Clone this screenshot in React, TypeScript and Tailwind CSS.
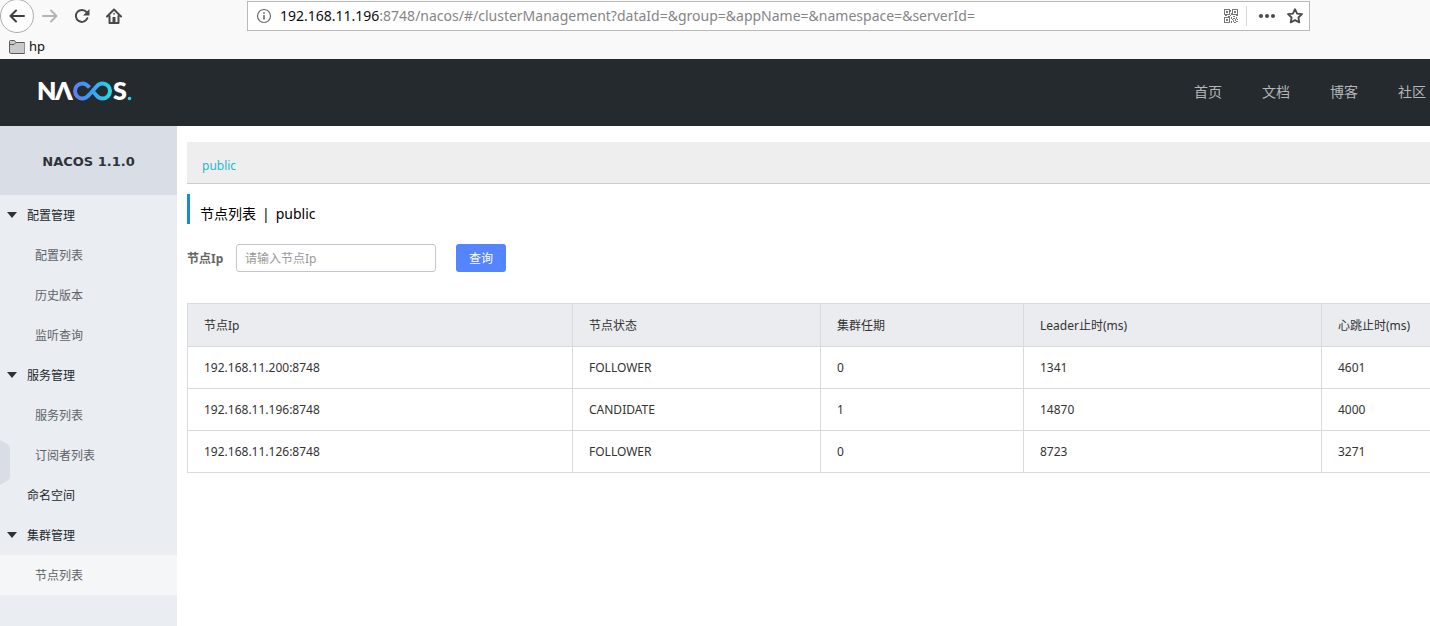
const navLinks = ['首页', '文档', '博客', '社区'];

const menu = [
  { title: '配置管理', children: ['配置列表', '历史版本', '监听查询'] },
  { title: '服务管理', children: ['服务列表', '订阅者列表'] },
  { title: '命名空间', children: [] },
  { title: '集群管理', children: ['节点列表'] },
];

const activeItem = '节点列表';

const columns = [
  { label: '节点Ip', width: 'w-[385px]' },
  { label: '节点状态', width: 'w-[248px]' },
  { label: '集群任期', width: 'w-[203px]' },
  { label: 'Leader止时(ms)', width: 'w-[298px]' },
  { label: '心跳止时(ms)', width: '' },
];

const nodes = [
  ['192.168.11.200:8748', 'FOLLOWER', '0', '1341', '4601'],
  ['192.168.11.196:8748', 'CANDIDATE', '1', '14870', '4000'],
  ['192.168.11.126:8748', 'FOLLOWER', '0', '8723', '3271'],
];

function QrIcon() {
  return (
    <svg width="14" height="14" viewBox="0 0 14 14" fill="#77777a" shapeRendering="crispEdges">
      <path fillRule="evenodd" d="M0 0h6v6H0zM1 1v4h4V1zM8 0h6v6H8zM9 1v4h4V1zM0 8h6v6H0zM1 9v4h4V9z" />
      <path d="M2 2h2v2H2zM10 2h2v2h-2zM2 10h2v2H2zM6 1h1v2H6zM7 4h1v2H7zM1 6h2v1H1zM4 7h2v1H4zM6 6h1v1H6zM9 7h2v1H9zM12 6h2v1h-2zM7 8h1v2H7zM9 9h2v1H9zM12 8h1v2h-1zM8 10h1v1H8zM11 10h1v2h-1zM13 10h1v1h-1zM7 12h1v2H7zM9 11h1v2H9zM10 13h2v1h-2zM12 12h2v1h-2z" />
    </svg>
  );
}

function BrowserBar() {
  return (
    <div className="h-[59px] bg-[#f9f9fa]">
      <div className="flex h-8 items-center">
        <div className="flex w-[247px] shrink-0 items-center">
          <button aria-label="Back" className="flex size-[34px] shrink-0 items-center justify-center rounded-full border border-[#adadae] bg-[#fdfdfd]">
            <svg width="16" height="16" viewBox="0 0 16 16" fill="none" stroke="#3f3f41" strokeWidth="2" strokeLinecap="round" strokeLinejoin="round">
              <path d="M15 8H1.5M7 2.5 1.5 8 7 13.5" />
            </svg>
          </button>
          <button aria-label="Forward" className="flex w-8 justify-center">
            <svg width="16" height="16" viewBox="0 0 16 16" fill="none" stroke="#b4b4b6" strokeWidth="2" strokeLinecap="round" strokeLinejoin="round">
              <path d="M1 8h13.500M9 2.500 14.500 8 9 13.500" />
            </svg>
          </button>
          <button aria-label="Reload" className="flex w-8 justify-center">
            <svg width="16" height="16" viewBox="0 0 16 16" fill="none" stroke="#4a4a4c" strokeWidth="2" strokeLinecap="round">
              <path d="M13.4 10.2A6 6 0 1 1 12.6 4.2" />
              <path d="M15.5 1v6.5H9z" fill="#4a4a4c" stroke="none" />
            </svg>
          </button>
          <button aria-label="Home" className="flex w-8 justify-center">
            <svg width="16" height="16" viewBox="0 0 16 16" fill="none" stroke="#4a4a4c" strokeWidth="2" strokeLinecap="round" strokeLinejoin="round">
              <path d="M1 8.5 8 1.5l7 7M3.5 8v7h9V8" />
              <path d="M6.5 9h3v6h-3z" fill="#4a4a4c" stroke="none" />
              <path d="M8 5.5v.5" strokeWidth="1.5" />
            </svg>
          </button>
        </div>
        <div className="mr-[120px] flex h-[30px] flex-1 items-center border border-[#b9b9ba] bg-white font-['Noto_Sans','Noto_Sans_CJK_SC',sans-serif] text-sm">
          <svg className="mx-2 shrink-0" width="16" height="16" viewBox="0 0 16 16" fill="none" stroke="#6a6a6c">
            <circle cx="8" cy="8" r="6.5" strokeWidth="1.2" />
            <path d="M8 7v4.5M8 4.2v1.6" strokeWidth="1.6" />
          </svg>
          <label htmlFor="address" className="text-[#0c0c0d]">192.168.11.196</label>
          <input
            id="address"
            className="min-w-0 flex-1 text-[#858587] outline-none"
            defaultValue=":8748/nacos/#/clusterManagement?dataId=&group=&appName=&namespace=&serverId="
          />
          <button aria-label="QR code"><QrIcon /></button>
          <span className="mx-2 h-5 w-px bg-[#d7d7db]" />
          <button aria-label="Page actions" className="flex w-6 justify-center">
            <svg width="16" height="16" viewBox="0 0 16 16" fill="#4a4a4c">
              <circle cx="2" cy="8" r="2" />
              <circle cx="8" cy="8" r="2" />
              <circle cx="14" cy="8" r="2" />
            </svg>
          </button>
          <button aria-label="Bookmark" className="mr-1.5 ml-2">
            <svg width="16" height="16" viewBox="0 0 16 16" fill="none" stroke="#4a4a4c" strokeWidth="1.8" strokeLinejoin="round">
              <path d="m8 1.2 2.1 4.4 4.9.6-3.6 3.3.9 4.9L8 12.1l-4.3 2.3.9-4.9L1 6.2l4.9-.6z" />
            </svg>
          </button>
        </div>
      </div>
      <div className="flex h-[27px] items-center gap-1 pt-0.5 pl-[9px]">
        <svg width="16" height="14" viewBox="0 0 16 14" fill="#c9c9cb" stroke="#5b5b5d">
          <path d="M.5 12.5v-11q0-1 1-1h4l1.5 2h8q1 0 1 1v9q0 1-1 1h-13q-1 0-1-1z" />
          <path d="M.5 4.5H5l2-2" fill="none" />
        </svg>
        <a href="#hp" className="font-['Noto_Sans',sans-serif] text-[13px] text-[#0c0c0d]">hp</a>
      </div>
    </div>
  );
}

function Logo() {
  return (
    <svg width="96" height="44" viewBox="0 0 96 44" role="img" aria-label="NACOS">
      <defs>
        <linearGradient id="loop" x1="36" y1="0" x2="74" y2="0" gradientUnits="userSpaceOnUse">
          <stop offset="0" stopColor="#5a7ff0" />
          <stop offset="0.45" stopColor="#3f9cf5" />
          <stop offset="1" stopColor="#25dbe6" />
        </linearGradient>
      </defs>
      <g fill="#fff" fontFamily="Lato, sans-serif" fontWeight="800" fontSize="25">
        <text x="-1" y="31">N</text>
        <text x="17" y="31">Λ</text>
        <text x="75" y="31">S</text>
      </g>
      <g fill="none" stroke="url(#loop)" strokeWidth="4" strokeLinejoin="round">
        <path d="M51.500 18.500Q48 14.500 44.500 14.500a7.500 7.500 0 0 0 0 15Q48 29.500 51.500 25.500" />
        <path d="M51 26 58.500 17.500Q61 14.500 64.500 14.500a7.500 7.500 0 0 1 0 15Q61 29.500 58.500 26.500L54.500 22" />
      </g>
      <circle cx="91.5" cy="29.5" r="1.8" fill="#25dbe6" />
    </svg>
  );
}

function Header() {
  return (
    <header className="flex h-[67px] items-center justify-between bg-[#252a2f] pr-1 pb-1 pl-[38px]">
      <a href="#home"><Logo /></a>
      <nav className="flex gap-10 pt-0.5 text-sm text-[#b4b6b8]">
        {navLinks.map((link) => (
          <a key={link} href="#nav">{link}</a>
        ))}
      </nav>
    </header>
  );
}

function Sidebar() {
  return (
    <aside className="relative w-[177px] shrink-0 bg-[#eaedf2]">
      <h1 className="flex h-[69px] items-center justify-center bg-[#d9dde6] pt-0.5 font-['DejaVu_Sans',sans-serif] text-[13px] font-bold text-[#2f3338]">
        NACOS 1.1.0
      </h1>
      <ul>
        {menu.map((group) => (
          <li key={group.title}>
            <a href="#menu" className="flex h-10 items-center pt-0.5 text-[#24282c]">
              <span className="w-[27px] pb-0.5 pl-[7px]">
                {group.children.length > 0 && (
                  <svg width="10" height="6" viewBox="0 0 10 6" fill="#2f3338">
                    <path d="M0 0h10L5 6z" />
                  </svg>
                )}
              </span>
              {group.title}
            </a>
            <ul>
              {group.children.map((item) => (
                <li key={item}>
                  <a
                    href="#menu"
                    className={`flex h-10 items-center pt-0.5 pl-[35px] text-[#5f6366] ${item === activeItem ? 'bg-[#f4f6f8]' : ''}`}
                  >
                    {item}
                  </a>
                </li>
              ))}
            </ul>
          </li>
        ))}
      </ul>
      {/* collapse handle on the window edge */}
      <svg className="absolute top-[314px] left-0" width="10" height="45" viewBox="0 0 10 45" fill="#d9dde6">
        <path d="M0 0 7 4q3 2 3 5v27q0 3-3 5l-7 4z" />
      </svg>
    </aside>
  );
}

function NodeTable() {
  return (
    <table className="mt-[31px] w-full table-fixed border-collapse text-left text-[#333]">
      <thead>
        <tr className="h-[43px] bg-[#ebecf0]">
          {columns.map((col) => (
            <th key={col.label} className={`border border-r-0 border-[#d9dade] px-4 pt-0.5 font-normal ${col.width}`}>
              {col.label}
            </th>
          ))}
        </tr>
      </thead>
      <tbody>
        {nodes.map((row) => (
          <tr key={row[0]} className="h-[42px]">
            {row.map((cell, i) => (
              <td key={i} className="border border-r-0 border-[#d9dade] px-4">{cell}</td>
            ))}
          </tr>
        ))}
      </tbody>
    </table>
  );
}

export default function App() {
  return (
    <div className="flex min-h-screen flex-col overflow-hidden bg-white font-['Noto_Sans','Noto_Sans_CJK_SC',sans-serif] text-xs">
      <BrowserBar />
      <Header />
      <div className="flex flex-1">
        <Sidebar />
        <main className="min-w-0 flex-1 pt-4 pl-[10px]">
          <div className="flex h-[42px] items-center border-b border-[#ccc] bg-[#eee] pt-1.5 pl-[15px]">
            <a href="#public" className="text-[#1fb8cf]">public</a>
          </div>
          <h2 className="mt-[10px] flex h-[30px] items-center gap-1.5 border-l-3 border-[#1390cc] pt-2.5 pl-[10px] text-sm text-black">
            <span>节点列表</span>
            <span>|</span>
            <span>public</span>
          </h2>
          <form className="mt-5 flex h-7 items-center">
            <label htmlFor="node-ip" className="w-[49px] pt-0.5 font-bold text-[#666]">节点Ip</label>
            <input
              id="node-ip"
              placeholder="请输入节点Ip"
              className="h-7 w-[200px] rounded-[3px] border border-[#c4c6cf] px-2 placeholder:text-[#999]"
            />
            <button type="button" className="ml-5 h-7 w-[50px] rounded-[3px] bg-[#5584ff] pt-0.5 text-white">查询</button>
          </form>
          <NodeTable />
        </main>
      </div>
    </div>
  );
}
